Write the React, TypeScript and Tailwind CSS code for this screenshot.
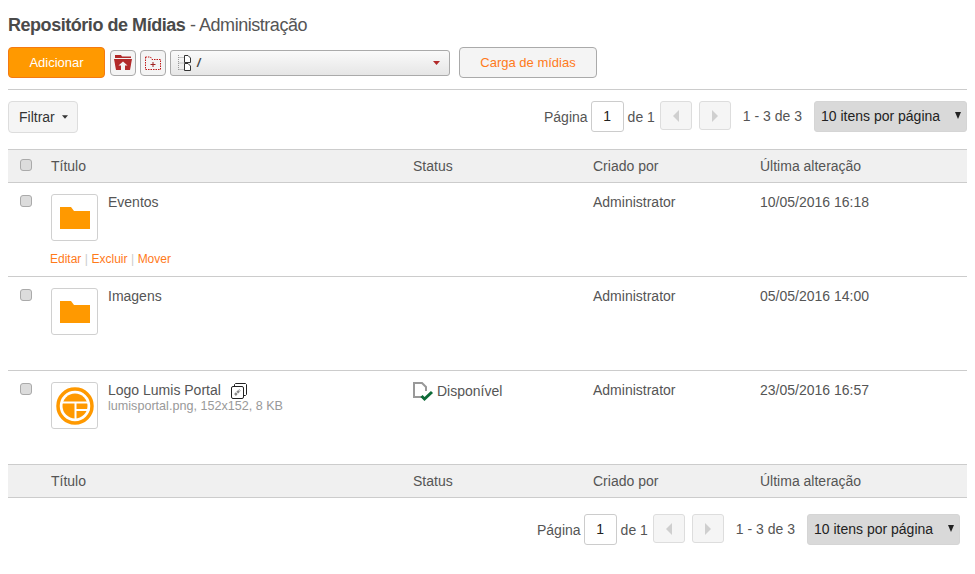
const Caret = ({ className = "" }: { className?: string }) => (
  <svg width="7" height="4" viewBox="0 0 7 4" className={className}><path d="M0 0h7L3.5 4z" fill="currentColor" /></svg>
);

const Check = () => (
  <span className="block w-[12px] h-[12px] rounded-[3px] border border-[#aaaaaa] bg-[#dcdcdc]" />
);

const Folder = () => (
  <svg width="30" height="22" viewBox="0 0 30 22"><path d="M0 0h11l3 4h16v18H0z" fill="#ff9900" /></svg>
);

const Logo = () => (
  <svg width="38" height="38" viewBox="0 0 38 38">
    <circle cx="19" cy="19" r="17" fill="none" stroke="#ff9900" strokeWidth="3.5" />
    <circle cx="19" cy="19" r="12.5" fill="#ff9900" />
    <path d="M5 15.5h28M19.5 15.5V33M19.5 23h14" stroke="#fff" strokeWidth="2" fill="none" />
  </svg>
);

const Thumb = ({ children }: { children: React.ReactNode }) => (
  <div className="w-[47px] h-[47px] shrink-0 rounded-[3px] border border-[#d0d0d0] bg-white flex items-center justify-center">{children}</div>
);

const HeaderRow = ({ check }: { check?: boolean }) => (
  <div className="grid grid-cols-[43px_362px_180px_167px_207px] h-[34px] items-center bg-[#f0f0f0] border-y border-[#cccccc] text-[14px] text-[#555555]">
    <div className="pl-[12px] -mt-[2px]">{check && <Check />}</div>
    <div>Título</div>
    <div>Status</div>
    <div>Criado por</div>
    <div>Última alteração</div>
  </div>
);

const Pager = () => (
  <div className="flex items-start text-[14px] leading-[31px] text-[#555555]">
    <span className="leading-[32px]">Página</span>
    <span className="ml-[3px] w-[33px] h-[31px] rounded-[3px] border border-[#cccccc] bg-white text-[#222222] flex items-center justify-center">1</span>
    <span className="ml-[4px] leading-[32px]">de 1</span>
    <span className="ml-[5px] w-[32px] h-[29px] rounded-[3px] border border-[#dddddd] bg-[#f5f5f5] flex items-center justify-center">
      <svg width="6" height="12" viewBox="0 0 6 12"><path d="M6 0v12L0 6z" fill="#cfcfcf" /></svg>
    </span>
    <span className="ml-[7px] w-[32px] h-[29px] rounded-[3px] border border-[#dddddd] bg-[#f5f5f5] flex items-center justify-center">
      <svg width="6" height="12" viewBox="0 0 6 12"><path d="M0 0v12l6-6z" fill="#cfcfcf" /></svg>
    </span>
    <span className="ml-[12px] leading-[30px]">1 - 3 de 3</span>
    <span className="ml-[12px] w-[153px] h-[31px] rounded-[3px] border border-[#d5d5d5] bg-[#d9d9d9] text-[#222222] flex items-center justify-between pl-[6px] pr-[5px] pb-[1px]">
      <span>10 itens por página</span>
      <svg width="6" height="7" viewBox="0 0 6 7" className="mb-[1px]"><path d="M0 0h6L3 7z" fill="#222222" /></svg>
    </span>
  </div>
);

const Row = ({
  thumb, title, extra, sub, status, date, actions,
}: {
  thumb: React.ReactNode; title: string; extra?: React.ReactNode; sub?: string; status?: React.ReactNode; date: string; actions?: boolean;
}) => (
  <div className="h-[93px] grid grid-cols-[43px_362px_180px_167px_207px] text-[14px] text-[#555555]">
    <div className="pl-[12px] pt-[12px]"><Check /></div>
    <div className="pt-[11px]">
      <div className="flex gap-[10px]">
        <Thumb>{thumb}</Thumb>
        <div className="-mt-[2px]">
          <div className="flex items-start leading-[20px]">
            <span>{title}</span>
            {extra}
          </div>
          {sub && <div className="text-[12.6px] leading-[12px] text-[#999999]">{sub}</div>}
        </div>
      </div>
      {actions && (
        <div className="mt-[10px] -ml-[1px] text-[12px] leading-[16px] text-[#ff7a1a] flex">
          <span>Editar</span><span className="mx-[3.5px] text-[#cccccc]">|</span>
          <span>Excluir</span><span className="mx-[3.5px] text-[#cccccc]">|</span>
          <span>Mover</span>
        </div>
      )}
    </div>
    <div className="pt-[10px]">{status}</div>
    <div className="pt-[9px] leading-[20px]">Administrator</div>
    <div className="pt-[9px] leading-[20px]">{date}</div>
  </div>
);

const Divider = () => <div className="h-px bg-[#cccccc]" />;

export default function App() {
  return (
    <div className="w-[975px] h-[574px] overflow-hidden bg-white px-[8px] pt-[15px] font-['Liberation_Sans',Arial,sans-serif]">
      <h1 className="text-[18px] leading-[20px] font-normal text-[#555555] tracking-[-0.46px]">
        <b className="font-bold text-[#4a4a4a]">Repositório de Mídias</b> - Administração
      </h1>
      <div className="mt-[12px] h-[31px] flex items-center">
        <button className="w-[97px] h-[31px] rounded-[4px] bg-[#ff9900] border border-[#f47a12] text-white text-[13px]">Adicionar</button>
        <button className="ml-[5px] w-[26px] h-[26px] rounded-[4px] border border-[#aaaaaa] bg-[#f4f4f4] flex items-center justify-center">
          <svg width="18" height="15" viewBox="0 0 18 15">
            <path d="M1 0h6l1 1.5h9V3H1z" fill="#b22a2a" />
            <path d="M0 4h18l-2 11H2z" fill="#b22a2a" />
            <path d="M9 6.5l4.5 4h-2.5V15H7v-4.5H4.500z" fill="#f4f4f4" />
          </svg>
        </button>
        <button className="ml-[4px] w-[26px] h-[26px] rounded-[4px] border border-[#aaaaaa] bg-[#f4f4f4] flex items-center justify-center">
          <svg width="16" height="14" viewBox="0 0 16 14">
            <path d="M.5 1v12.500h15V3.500H7L5.500 1z" fill="none" stroke="#c01818" strokeDasharray="1.500 1" />
            <path d="M8 6v5M5.500 8.500h5" stroke="#a02020" fill="none" />
          </svg>
        </button>
        <div className="ml-[4px] w-[280px] h-[26px] rounded-[3px] border border-[#aaaaaa] bg-gradient-to-b from-[#fafafa] to-[#e6e6e6] flex items-center pl-[6px] pr-[9px]">
          <svg width="14" height="16" viewBox="0 0 14 16">
            <path d="M1.500 0v16M1.500 2.500h5M1.500 8h5M1.500 14.500h5" stroke="#999" strokeDasharray="1 1" fill="none" />
            <path d="M7.500.5h3.500l2.500 2.500v4.500h-6zM7.500 8.500h3.500l2.500 2.500v4.500h-6z" stroke="#333" fill="#fff" />
          </svg>
          <i className="ml-[6px] text-[12px] font-bold text-[#444444]">/</i>
          <Caret className="ml-auto text-[#b22a2a]" />
        </div>
        <button className="ml-[9px] w-[138px] h-[31px] rounded-[4px] border border-[#aaaaaa] bg-[#f4f4f4] text-[#ff7a1a] text-[13px]">Carga de mídias</button>
      </div>
      <div className="mt-[11px] h-px bg-[#cccccc]" />
      <div className="mt-[11px] h-[33px] flex items-start justify-between">
        <button className="w-[70px] h-[32px] rounded-[4px] border border-[#dddddd] bg-[#f5f5f5] text-[14px] text-[#333333] flex items-center pl-[10px]">
          Filtrar
          <Caret className="ml-[7px] text-[#333333] w-[6px]" />
        </button>
        <Pager />
      </div>
      <div className="mt-[15px]">
        <HeaderRow check />
        <Row thumb={<Folder />} title="Eventos" date="10/05/2016 16:18" actions />
        <Divider />
        <Row thumb={<Folder />} title="Imagens" date="05/05/2016 14:00" />
        <Divider />
        <Row
          thumb={<Logo />}
          title="Logo Lumis Portal"
          sub="lumisportal.png, 152x152, 8 KB"
          date="23/05/2016 16:57"
          extra={
            <svg className="ml-[10px] mt-[3px]" width="16" height="16" viewBox="0 0 16 16">
              <path d="M3.500 3V1.500l1-1h10l1 1v10l-1 1H13" fill="none" stroke="#222" />
              <rect x=".5" y="3.500" width="12" height="12" rx="1.500" fill="#fff" stroke="#222" />
              <path d="M4 12l5-5" stroke="#888" strokeWidth="2.500" strokeDasharray="2.500 .7" />
            </svg>
          }
          status={
            <div className="flex items-start leading-[20px]">
              <svg width="21" height="21" viewBox="0 0 21 21" className="mt-[1px]">
                <path d="M10 15H1V1h8l4 4v4" fill="none" stroke="#999" strokeWidth="2" />
                <path d="M8.500 14l3 3 7.500-7" fill="none" stroke="#0e6b38" strokeWidth="3" />
              </svg>
              <span className="ml-[3px]">Disponível</span>
            </div>
          }
        />
        <HeaderRow />
      </div>
      <div className="mt-[16px] flex justify-end pr-[7px]">
        <Pager />
      </div>
    </div>
  );
}
